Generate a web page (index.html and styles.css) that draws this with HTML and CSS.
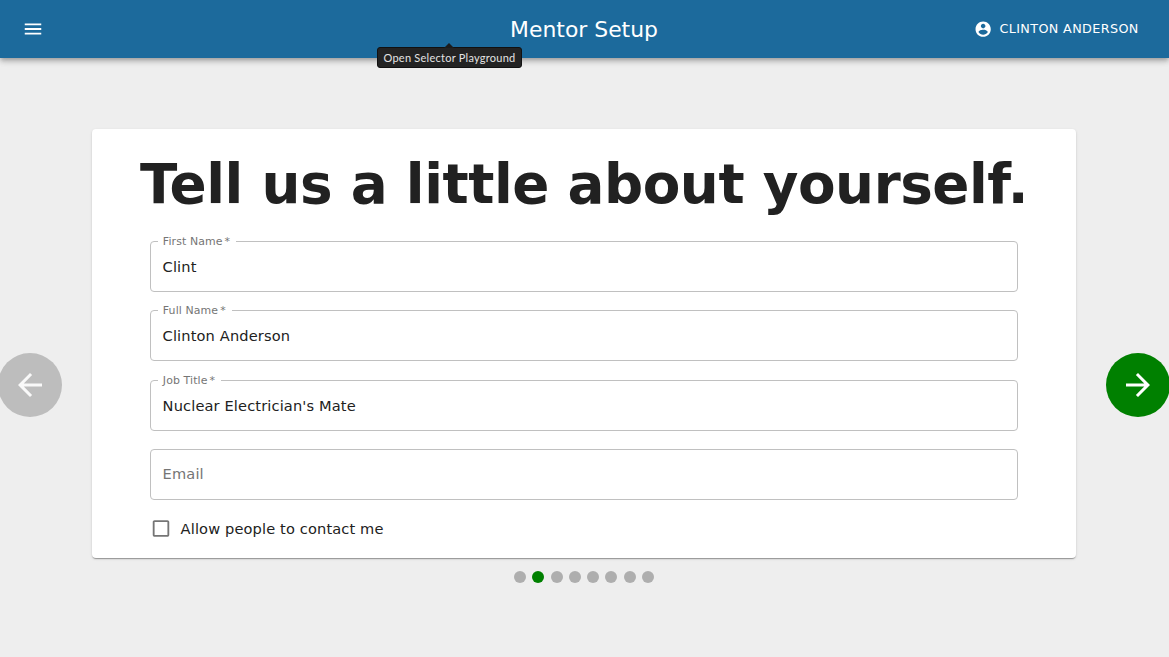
FILE: index.html
```html
<!DOCTYPE html>
<html lang="en">
<head>
<meta charset="utf-8">
<title>Mentor Setup</title>
<link rel="stylesheet" href="styles.css">
</head>
<body>
<header class="app-bar">
  <svg class="menu-icon" viewBox="0 0 24 24"><path d="M3 18h18v-2H3v2zm0-5h18v-2H3v2zm0-7v2h18V6H3z"/></svg>
  <h1 class="title">Mentor Setup</h1>
  <div class="account">
    <svg class="account-icon" viewBox="0 0 24 24"><path d="M12 2C6.48 2 2 6.48 2 12s4.48 10 10 10 10-4.48 10-10S17.52 2 12 2zm0 3c1.66 0 3 1.34 3 3s-1.34 3-3 3-3-1.34-3-3 1.34-3 3-3zm0 14.2c-2.5 0-4.71-1.28-6-3.22.03-1.99 4-3.08 6-3.08 1.99 0 5.97 1.09 6 3.08-1.29 1.94-3.5 3.22-6 3.22z"/></svg>
    <span class="account-name">CLINTON ANDERSON</span>
  </div>
  <div class="tooltip"><span class="tooltip-text">Open Selector Playground</span></div>
</header>
<main class="stage">
  <div class="fab fab-back"><svg class="fab-icon" viewBox="0 0 24 24"><path d="M20 11H7.83l5.59-5.59L12 4l-8 8 8 8 1.41-1.41L7.83 13H20v-2z"/></svg></div>
  <section class="card">
    <h2 class="heading"><span class="heading-text">Tell us a little about yourself.</span></h2>
    <form class="form">
      <div class="field"><label class="label">First Name<span class="star">*</span></label><span class="value">Clint</span></div>
      <div class="field"><label class="label">Full Name<span class="star">*</span></label><span class="value">Clinton Anderson</span></div>
      <div class="field"><label class="label">Job Title<span class="star">*</span></label><span class="value">Nuclear Electrician's Mate</span></div>
      <div class="field field-empty"><span class="value placeholder">Email</span></div>
      <div class="check">
        <svg class="check-icon" viewBox="0 0 24 24"><path d="M19 5v14H5V5h14m0-2H5c-1.1 0-2 .9-2 2v14c0 1.1.9 2 2 2h14c1.1 0 2-.9 2-2V5c0-1.1-.9-2-2-2z"/></svg>
        <span class="check-text">Allow people to contact me</span>
      </div>
    </form>
  </section>
  <div class="fab fab-next"><svg class="fab-icon" viewBox="0 0 24 24"><path d="M12 4l-1.41 1.41L16.17 11H4v2h12.17l-5.58 5.59L12 20l8-8z"/></svg></div>
</main>
<div class="dots">
  <i class="dot"></i><i class="dot dot-on"></i><i class="dot"></i><i class="dot"></i><i class="dot"></i><i class="dot"></i><i class="dot"></i><i class="dot"></i>
</div>
</body>
</html>
```
FILE: styles.css
```css
* { box-sizing: border-box; }
body {
  margin: 0;
  height: 657px;
  overflow: hidden;
  background: #eee;
  color: #212121;
  font-family: "DejaVu Sans", sans-serif;
  font-size: 14.6px;
}
svg { display: block; fill: currentColor; }
.app-bar {
  position: relative;
  display: grid;
  grid-template-columns: 1fr auto 1fr;
  align-items: center;
  height: 58px;
  padding: 0 30.3px 0 22px;
  background: #1c6a9c;
  color: #fff;
  box-shadow: 0 2px 4px -1px rgba(0,0,0,.2), 0 4px 5px 0 rgba(0,0,0,.14), 0 1px 9px 0 rgba(0,0,0,.12);
}
.menu-icon { width: 22px; height: 22px; }
.title {
  margin: 0 0 0 7.4px;
  font-size: 21.9px;
  font-weight: 400;
  line-height: 29px;
}
.account {
  display: flex;
  align-items: center;
  justify-content: flex-end;
  gap: 7px;
}
.account-icon { width: 18.3px; height: 18.3px; }
.account-name { font-size: 12.75px; letter-spacing: .02857em; }
.tooltip {
  position: absolute;
  left: 377px;
  top: 47px;
  width: 145px;
  height: 21px;
  border: 1px solid #111;
  border-radius: 3px;
  background: #232323;
  color: #e4e4e4;
  font: 11px/20px Lato, sans-serif;
  letter-spacing: .25px;
  text-align: center;
  white-space: nowrap;
}
.tooltip::before {
  content: "";
  position: absolute;
  left: 66px;
  top: -5px;
  border: 5px solid transparent;
  border-top: 0;
  border-bottom-color: #1b1b1b;
}
.stage {
  display: grid;
  grid-template-columns: 92px 984px 93px;
  height: 429px;
  margin-top: 71px;
}
.fab {
  display: flex;
  align-items: center;
  justify-content: center;
  width: 64px;
  height: 64px;
  margin-top: 224px;
  border-radius: 50%;
  color: #fff;
}
.fab-back { margin-left: -2px; background: #bdbdbd; }
.fab-back .fab-icon { opacity: .92; }
.fab-next { margin-left: 30px; background: #008000; }
.fab-icon { width: 36px; height: 36px; }
.card {
  background: #fff;
  border-radius: 4px;
  box-shadow: 0 2px 1px -1px rgba(0,0,0,.2), 0 1px 1px 0 rgba(0,0,0,.14), 0 1px 3px 0 rgba(0,0,0,.12);
}
.heading {
  margin: 0;
  padding-top: 22px;
  font-size: 54.75px;
  font-weight: 700;
  line-height: 66px;
  letter-spacing: -.00833em;
  text-align: center;
  white-space: nowrap;
}
.form { margin: 24px 58px 0; }
.field {
  position: relative;
  display: flex;
  align-items: center;
  height: 51px;
  margin-bottom: 18.4px;
  padding: 0 11.6px;
  border: 1px solid #c0c0c0;
  border-radius: 4px;
}
.field-empty { padding-bottom: 2px; }
.label {
  position: absolute;
  left: 7px;
  top: -8px;
  padding: 0 6.2px 0 4.8px;
  background: #fff;
  color: #757575;
  font-size: 10.95px;
  line-height: 15px;
  letter-spacing: .00938em;
}
.star { margin-left: 2px; }
.value, .check-text { letter-spacing: .00938em; }
.placeholder { color: #757575; }
.check {
  display: flex;
  align-items: center;
  gap: 8.6px;
  height: 22px;
  margin-top: -1.4px;
}
.check-icon { width: 22px; height: 23px; color: #757575; }
.dots {
  display: flex;
  justify-content: space-between;
  width: 140px;
  margin: 13px 0 0 514px;
}
.dot { width: 12px; height: 12px; border-radius: 50%; background: #aeaeae; }
.dot-on { background: #008000; }
```
